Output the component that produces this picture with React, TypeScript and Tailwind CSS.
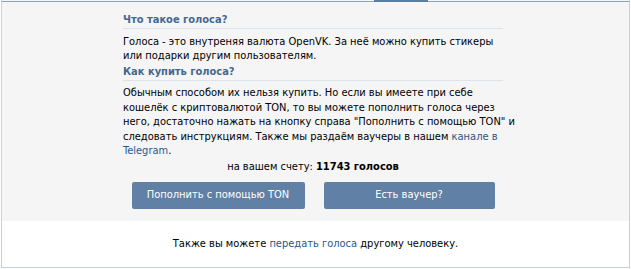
const font = "font-['DejaVu_Sans_Condensed','DejaVu_Sans',sans-serif]";

function Heading({ children }: { children: React.ReactNode }) {
  return (
    <div className="w-[380px] border-b border-[#dde3ea] pb-px text-[11px] leading-[14px] font-bold text-[#45688e]">
      {children}
    </div>
  );
}

export default function App() {
  return (
    <div className={`w-[631px] h-[269px] bg-white text-[11px] text-black ${font}`}>
      <div className="ml-px w-[629px] border-x border-b border-[#c5d0db]">
        <div className="h-[2px] bg-[#f5f5f5] flex items-start">
          <div className="w-[372px] h-px mt-px bg-[#8ea3ba]" />
          <div className="w-[54px] h-[2px] bg-[#5b7ea5]" />
          <div className="flex-1 h-px mt-px bg-[#8ea3ba]" />
        </div>
        <div className="bg-[#f5f5f5] pt-[11px] pb-[12px]">
          <div className="ml-[121px] w-[400px]">
            <Heading>Что такое голоса?</Heading>
            <p className="mt-[6px] leading-[14px]">
              Голоса - это внутреняя валюта OpenVK. За неё можно купить стикеры
              <br />
              или подарки другим пользователям.
            </p>
            <div className="mt-[2px]">
              <Heading>Как купить голоса?</Heading>
            </div>
            <p className="mt-[5px] leading-[14.5px] whitespace-nowrap">
              Обычным способом их нельзя купить. Но если вы имеете при себе
              <br />
              кошелёк с криптовалютой TON, то вы можете пополнить голоса через
              <br />
              него, достаточно нажать на кнопку справа "Пополнить с помощью TON" и
              <br />
              следовать инструкциям. Также мы раздаём ваучеры в нашем{" "}
              <a className="text-[#2a5885]" href="#">
                канале в
                <br />
                Telegram
              </a>
              .
            </p>
            <div className="w-[380px] mt-px text-center leading-[14px]">
              на вашем счету: <b>11743 голосов</b>
            </div>
            <div className="w-[380px] mt-[8px] flex justify-center gap-[19px]">
              <button className="w-[173px] h-[27px] bg-[#6180a5] text-white text-[11px] rounded-[2px]">
                Пополнить с помощью TON
              </button>
              <button className="w-[171px] h-[27px] bg-[#6180a5] text-white text-[11px] rounded-[2px]">
                Есть ваучер?
              </button>
            </div>
          </div>
        </div>
        <div className="h-[46px] flex items-center justify-center pt-px">
          <span>
            Также вы можете{" "}
            <a className="text-[#2a5885]" href="#">передать голоса</a> другому человеку.
          </span>
        </div>
      </div>
    </div>
  );
}
